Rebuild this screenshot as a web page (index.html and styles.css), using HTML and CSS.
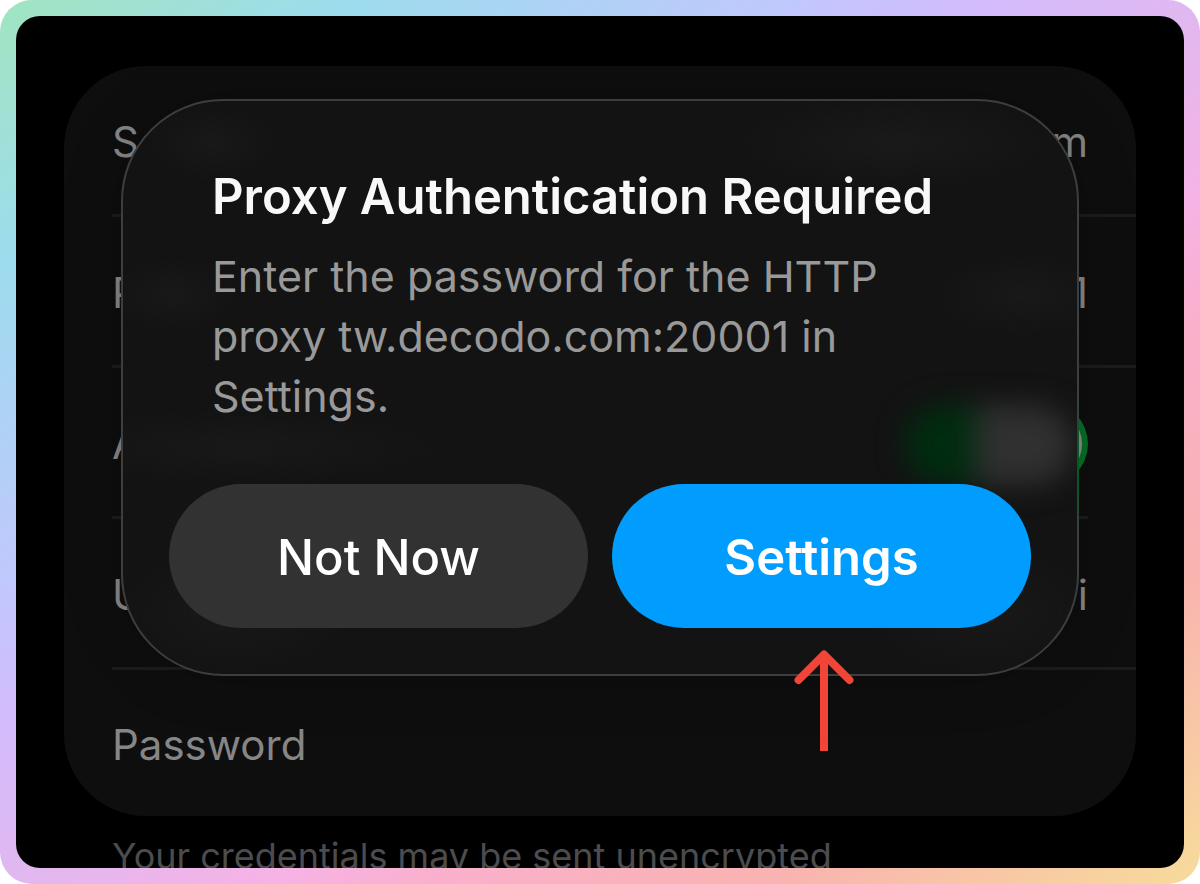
FILE: index.html
```html
<!DOCTYPE html>
<html lang="en">
<head>
	<meta charset="UTF-8">
	<meta name="viewport" content="width=device-width, initial-scale=1">
	<title>Proxy Authentication Required</title>
	<link rel="stylesheet" href="styles.css">
</head>
<body>
<div class="frame">
  <main class="screen">
    <div class="list">
      <div class="row"><span>Server</span><span>tw.decodo.com</span></div>
      <div class="row"><span>Port</span><span>20001</span></div>
      <div class="row inset">
        <label for="auth">Authentication</label>
        <input id="auth" class="switch" type="checkbox" checked>
      </div>
      <div class="row"><span>Username</span><span>decodo-i</span></div>
      <div class="row"><span>Password</span></div>
    </div>
    <p class="footnote">Your credentials may be sent unencrypted</p>

    <div class="alert" role="alertdialog" aria-labelledby="alert-title" aria-describedby="alert-text">
      <div class="glass"></div>
      <div class="alert-body">
        <h1 id="alert-title">Proxy Authentication Required</h1>
        <p id="alert-text">Enter the password for the HTTP proxy tw.decodo.com:20001 in Settings.</p>
      </div>
      <div class="actions">
        <button type="button">Not Now</button>
        <div class="pointed">
          <button type="button" class="primary">Settings</button>
          <svg class="arrow" width="60" height="102" viewBox="0 0 60 102" aria-hidden="true">
            <path d="M30 101V8" fill="none" stroke="#f2453a" stroke-width="8"/>
            <path d="M4.500 30L30 4.500L55.500 30" fill="none" stroke="#f2453a" stroke-width="8" stroke-linecap="round" stroke-linejoin="round"/>
          </svg>
        </div>
      </div>
    </div>
  </main>
</div>
</body>
</html>
```
FILE: styles.css
```css
* {
  box-sizing: border-box;
}

body {
  margin: 0;
  background: white;
  font-family: Inter, "Liberation Sans", sans-serif;
}

/* rainbow frame */
.frame {
  display: flex;
  height: 100vh;
  padding: 16px;
  border-radius: 32px;
  background: linear-gradient(to bottom right,
    #a0e5bf 0%, #9ddcee 15%, #c0c8fc 33%, #d3bbfc 41%, #e0b8f0 50%,
    #f6b3e5 61%, #fab0cc 68%, #f9b3b0 82%, #f7dc9a 100%);
}

.screen {
  position: relative;
  flex: 1;
  overflow: hidden;
  padding: 50px 48px 0;
  border-radius: 24px;
  background: black;
}

/* dimmed settings list */
.list {
  overflow: hidden;
  padding-left: 48px;
  border-radius: 82px;
  background: #0e0e0e;
  color: #868686;
  font-size: 42px;
  line-height: 52px;
}

.row {
  display: flex;
  align-items: center;
  justify-content: space-between;
  height: 151px;
  padding: 4px 48px 0 0;
  border-bottom: 3px solid #1c1c1c;
}

.row.inset {
  margin-right: 48px;
  padding-right: 0;
}

.row:last-child {
  height: 146px;
  border-bottom: 0;
}

.switch {
  appearance: none;
  width: 190px;
  height: 84px;
  margin: 0;
  padding: 6px;
  border-radius: 42px;
  background: #066f28;
}

.switch::before {
  content: "";
  display: block;
  width: 118px;
  height: 72px;
  margin-left: auto;
  border-radius: 36px;
  background: #8c8c8c;
}

.footnote {
  margin: 18px 48px 0;
  color: #4c4c4f;
  font-size: 36px;
  line-height: 44px;
  white-space: nowrap;
}

/* alert */
.alert {
  position: absolute;
  top: 83px;
  left: 105px;
  right: 105px;
  padding: 64px 46px 46px;
  border: 2px solid #3e3e3e;
  border-radius: 102px;
  background: #131313;
  box-shadow: 0 0 60px rgba(0, 0, 0, .2);
}

/* soft traces of the rows behind the alert */
.glass {
  position: absolute;
  inset: 0;
  overflow: hidden;
  border-radius: 100px;
  background:
    radial-gradient(70px 40px at 90px 42px, #191919, transparent),
    radial-gradient(170px 50px at 770px 42px, #1a1a1a, transparent),
    radial-gradient(70px 40px at 50px 194px, #191919, transparent),
    radial-gradient(100px 45px at 900px 194px, #191919, transparent),
    radial-gradient(220px 40px at 120px 346px, #191919, transparent),
    radial-gradient(130px 70px at 110px 510px, #191919, transparent),
    radial-gradient(130px 70px at 860px 510px, #191919, transparent);
}

.glass::before {
  content: "";
  position: absolute;
  top: 304px;
  right: 4px;
  width: 168px;
  height: 80px;
  border-radius: 40px;
  background: linear-gradient(90deg, #002c10 36%, #303030 48%);
  filter: blur(14px);
}

/* the switch glows through the rim */
.alert::after {
  content: "";
  position: absolute;
  top: 300px;
  right: -2px;
  width: 2px;
  height: 130px;
  background: linear-gradient(transparent, #005a22 40%, #005a22 60%, transparent);
}

.alert-body {
  position: relative;
  padding: 0 43px;
}

.alert h1 {
  margin: 0 0 17px;
  color: #f8f8f8;
  font-size: 49px;
  font-weight: 600;
  line-height: 64px;
}

.alert p {
  margin: 0 0 58px;
  color: #999;
  font-size: 43px;
  line-height: 60px;
}

.actions {
  position: relative;
  display: grid;
  grid-template-columns: 1fr 1fr;
  gap: 24px;
}

.actions button {
  width: 100%;
  height: 144px;
  padding: 4px 0 0;
  border: 0;
  border-radius: 72px;
  background: #323232;
  color: white;
  font: 500 49px/60px Inter, "Liberation Sans", sans-serif;
}

.actions .primary {
  background: #009dff;
  font-weight: 600;
}

.pointed {
  position: relative;
}

/* red pointer under the main button */
.arrow {
  position: absolute;
  top: 166px;
  left: 182px;
}
```
